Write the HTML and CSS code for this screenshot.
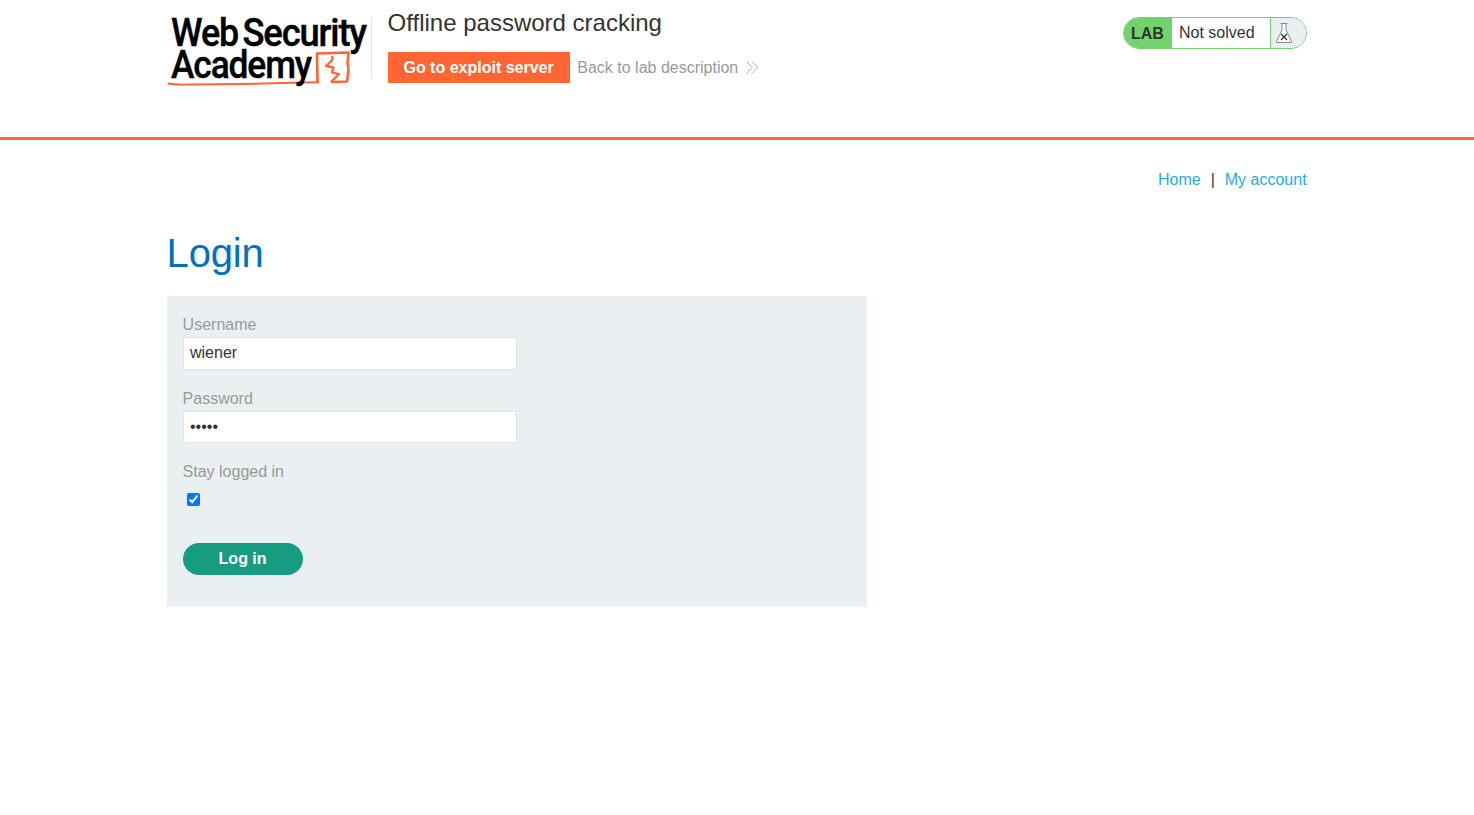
FILE: index.html
```html
<!DOCTYPE html>
<html lang="en">
<head>
<meta charset="utf-8">
<title>Offline password cracking</title>
<link rel="stylesheet" href="styles.css">
</head>
<body>
<header class="lab-header">
  <div class="container header-row">
    <svg class="logo" width="200" height="72" viewBox="0 0 200 72" role="img" aria-label="Web Security Academy">
      <g class="logo-mark">
        <path class="underline" d="M1.500 68.500Q8 70 25 69.500L75 69L125 67.700L151 67.300"/>
        <path d="M150.500 67L150 38.500L181.500 37.500L180.500 47L181.500 55L180 66.500L165 67"/>
        <path class="bolt" d="M165.300 42V45L159 51L166.500 52.500L165 57.500L172 59L164.500 66.500"/>
      </g>
      <g class="logo-text">
        <text x="4" y="30.500" textLength="67" lengthAdjust="spacingAndGlyphs">Web</text>
        <text x="75.500" y="30.500" textLength="123.500" lengthAdjust="spacingAndGlyphs">Security</text>
        <text x="4" y="62.700" textLength="140" lengthAdjust="spacingAndGlyphs">Academy</text>
      </g>
    </svg>
    <div class="title-box">
      <h2 class="lab-title">Offline password cracking</h2>
      <div class="lab-actions">
        <a class="exploit-button">Go to exploit server</a>
        <a class="back-link">Back to lab description
          <svg class="chevrons" width="13" height="14" viewBox="0 0 13 14"><path d="M.7 .7L6.200 6.500L.7 12.300M6.200 .7L11.700 6.500L6.200 12.300"/></svg>
        </a>
      </div>
    </div>
    <div class="status">
      <span class="status-tag">LAB</span>
      <span class="status-text">Not solved</span>
      <span class="status-icon">
        <svg width="18" height="22" viewBox="0 0 18 22"><path class="flask" d="M5.500 1.500H12.500M7 1.500V8L1.500 19V20.500H16.500V19L11 8V1.500"/><path class="cross" d="M6 12L12 18M12 12L6 18"/></svg>
      </span>
    </div>
  </div>
</header>
<main class="container">
  <nav class="top-links"><a>Home</a><span>|</span><a>My account</a></nav>
  <h1 class="page-title">Login</h1>
  <form class="login-form">
    <label class="label" for="username">Username</label>
    <input class="field field-user" id="username" type="text" value="wiener">
    <label class="label" for="password">Password</label>
    <input class="field field-pass" id="password" type="password" value="peter">
    <label class="label" for="stay">Stay logged in</label>
    <input class="check" id="stay" type="checkbox" checked>
    <button class="submit" type="button">Log in</button>
  </form>
</main>
</body>
</html>
```
FILE: styles.css
```css
* { box-sizing: border-box; }
body {
  margin: 0;
  background: #fff;
  color: #333332;
  font: 16px/24px "Liberation Sans", Arial, sans-serif;
}
.container { width: 1140px; margin: 0 auto 0 166.600px; }
.lab-header { height: 140px; border-bottom: 3px solid #ff6633; }
.header-row { display: flex; align-items: flex-start; }
.logo { flex: none; margin-top: 15px; overflow: visible; }
.logo-text {
  font-family: Roboto, sans-serif;
  font-size: 38px;
  font-weight: 500;
  letter-spacing: -1.200px;
  fill: #000;
  stroke: #000;
  stroke-width: .4;
}
.logo-mark { fill: none; stroke: #ff6633; stroke-width: 2.600; stroke-linejoin: round; stroke-linecap: round; }
.underline { stroke-width: 2; }
.bolt { stroke-width: 2.300; }
.title-box {
  position: relative;
  margin-left: 4px;
  padding-left: 17px;
}
.title-box::before {
  content: "";
  position: absolute;
  left: 0;
  top: 17px;
  width: 1px;
  height: 62px;
  background: #e4e4e4;
}
.lab-title { margin: 8px 0 14px; font-size: 24px; line-height: 30px; font-weight: 400; }
.lab-actions { display: flex; align-items: center; gap: 7.700px; }
.exploit-button {
  width: 182px;
  height: 31px;
  line-height: 31px;
  background: #ff6633;
  color: #fff;
  font-weight: 700;
  text-align: center;
}
.back-link { display: flex; align-items: center; gap: 7.500px; color: #999; }
.chevrons { fill: none; stroke: #999; stroke-width: .8; }
.status {
  display: flex;
  width: 184px;
  height: 32px;
  margin: 17px 0 0 auto;
  border: 1px solid #72d36d;
  border-radius: 16px;
  overflow: hidden;
  line-height: 30px;
}
.status-tag { width: 48px; padding-left: 7.400px; background: #72d36d; font-weight: 700; line-height: 32px; }
.status-text { width: 98px; padding-left: 7.400px; }
.status-icon { flex: 1; padding: 4px 0 0 4px; border-left: 1px solid #72d36d; background: #eaf0f2; line-height: 0; }
.flask { fill: #fff; stroke: #888; stroke-width: 1; }
.cross { stroke: #333332; stroke-width: 1.4; }
.top-links { display: flex; justify-content: flex-end; gap: 10px; padding-top: 28px; color: #333332; }
.top-links a { color: #29abe2; }
.page-title { margin: 37px 0 19px; color: #0071bc; font-size: 40px; letter-spacing: -.200px; line-height: 48px; font-weight: 400; }
.login-form {
  display: flex;
  flex-direction: column;
  align-items: flex-start;
  width: 700px;
  height: 311px;
  padding: 17px 16px 16px;
  background: #eaf0f2;
}
.label { height: 24px; color: #999; }
.field {
  width: 334px;
  padding: 0 6.400px 2px;
  border: 1px solid #e4e4e4;
  background: #fff;
  color: #333332;
  font: inherit;
}
.field-user { height: 33px; margin-bottom: 17px; }
.field-pass { height: 32px; padding-bottom: 0; margin-bottom: 17px; }
.check { width: 13px; height: 13px; margin: 8.500px 4px 37.500px; }
.submit {
  width: 120px;
  height: 32px;
  padding: 0 0 1px;
  border: 0;
  border-radius: 16px;
  background: #169c80;
  color: #fff;
  font: inherit;
  font-weight: 700;
}
```
